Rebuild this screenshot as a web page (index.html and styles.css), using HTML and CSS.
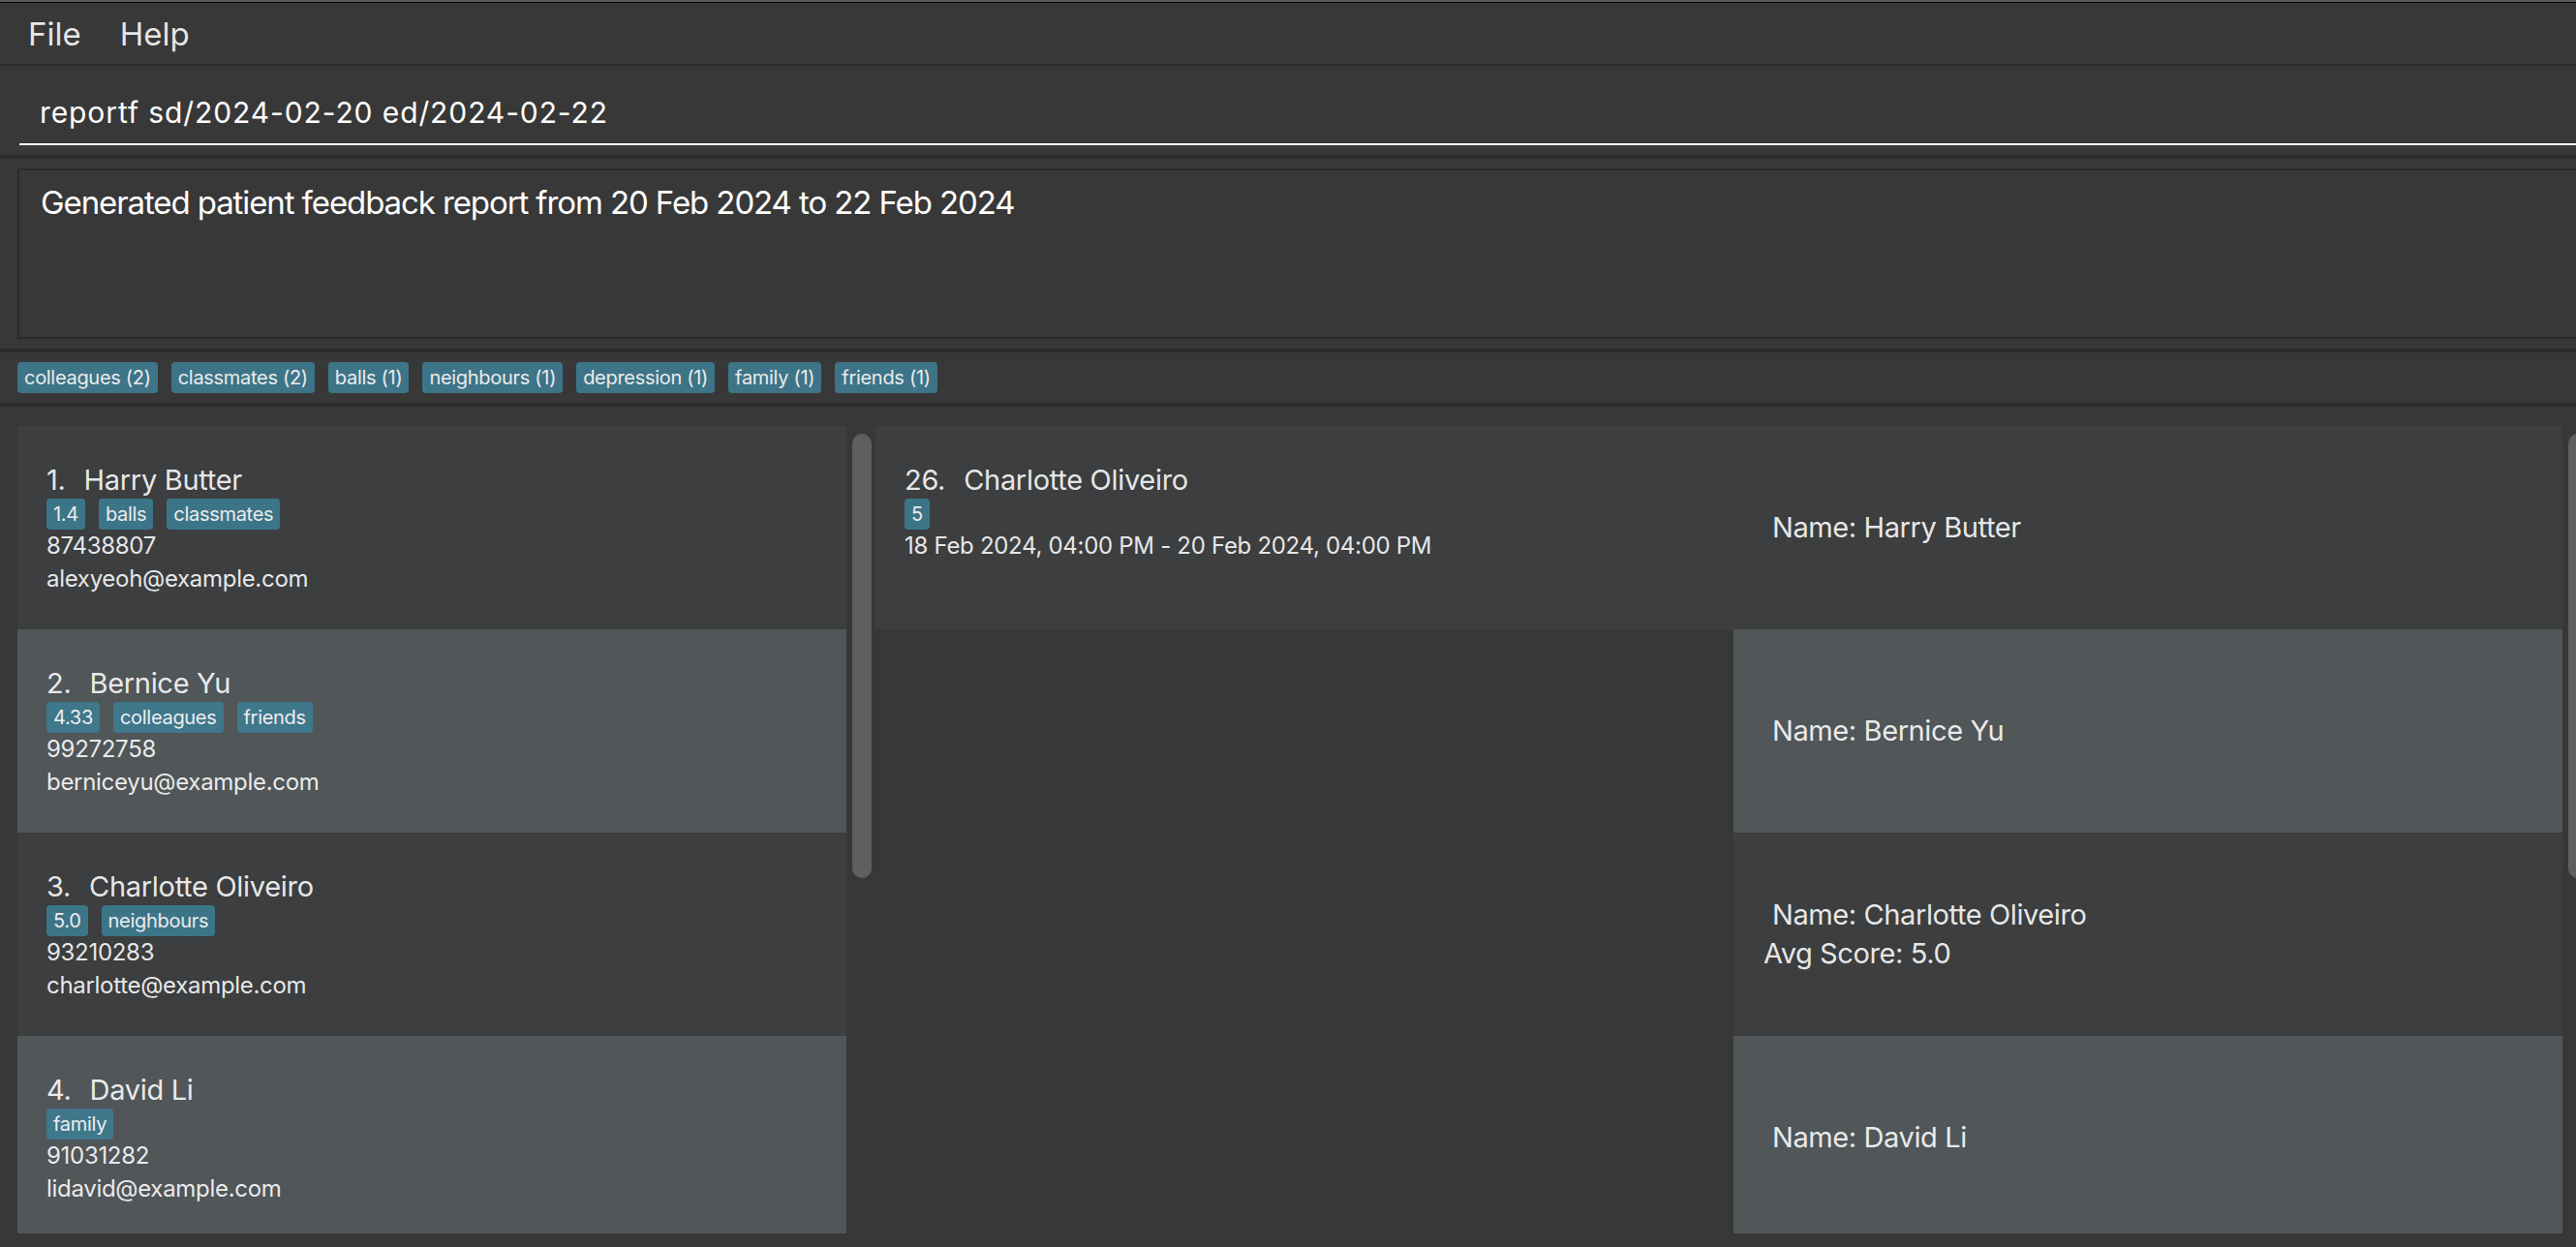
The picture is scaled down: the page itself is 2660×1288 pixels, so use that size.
FILE: index.html
```html
<!DOCTYPE html>
<html lang="en">
<head>
<meta charset="utf-8">
<title>Patient feedback</title>
<link rel="stylesheet" href="styles.css">
</head>
<body>
<div class="app">
  <div class="chrome"></div>
  <nav class="menubar">
    <span class="menu-item">File</span>
    <span class="menu-item">Help</span>
  </nav>
  <div class="rule"></div>
  <section class="command-pane">
    <div class="command-field">reportf sd/2024-02-20 ed/2024-02-22</div>
  </section>
  <div class="rule thick"></div>
  <section class="result-pane">
    <div class="result-box">Generated patient feedback report from 20 Feb 2024 to 22 Feb 2024</div>
  </section>
  <div class="rule thick"></div>
  <section class="tag-bar">
    <span class="tag">colleagues (2)</span>
    <span class="tag">classmates (2)</span>
    <span class="tag">balls (1)</span>
    <span class="tag">neighbours (1)</span>
    <span class="tag">depression (1)</span>
    <span class="tag">family (1)</span>
    <span class="tag">friends (1)</span>
  </section>
  <div class="rule thick"></div>
  <main class="lists">
    <div class="list list-persons">
      <div class="cells">
        <div class="card">
          <div class="name"><span class="idx">1.</span>Harry Butter</div>
          <div class="tags"><span class="tag">1.4</span><span class="tag">balls</span><span class="tag">classmates</span></div>
          <div class="small">87438807</div>
          <div class="small">alexyeoh@example.com</div>
        </div>
        <div class="card">
          <div class="name"><span class="idx">2.</span>Bernice Yu</div>
          <div class="tags"><span class="tag">4.33</span><span class="tag">colleagues</span><span class="tag">friends</span></div>
          <div class="small">99272758</div>
          <div class="small">berniceyu@example.com</div>
        </div>
        <div class="card">
          <div class="name"><span class="idx">3.</span>Charlotte Oliveiro</div>
          <div class="tags"><span class="tag">5.0</span><span class="tag">neighbours</span></div>
          <div class="small">93210283</div>
          <div class="small">charlotte@example.com</div>
        </div>
        <div class="card">
          <div class="name"><span class="idx">4.</span>David Li</div>
          <div class="tags"><span class="tag">family</span></div>
          <div class="small">91031282</div>
          <div class="small">lidavid@example.com</div>
        </div>
      </div>
      <div class="scroll-track"><div class="thumb"></div></div>
    </div>
    <div class="list list-events">
      <div class="cells">
        <div class="card">
          <div class="name"><span class="idx">26.</span>Charlotte Oliveiro</div>
          <div class="tags"><span class="tag">5</span></div>
          <div class="small">18 Feb 2024, 04:00 PM - 20 Feb 2024, 04:00 PM</div>
        </div>
      </div>
    </div>
    <div class="list list-scores">
      <div class="cells">
        <div class="score-card"><div class="score-name">Name: Harry Butter</div></div>
        <div class="score-card"><div class="score-name">Name: Bernice Yu</div></div>
        <div class="score-card"><div class="score-name">Name: Charlotte Oliveiro</div><div>Avg Score: 5.0</div></div>
        <div class="score-card"><div class="score-name">Name: David Li</div></div>
      </div>
      <div class="scroll-track"><div class="thumb"></div></div>
    </div>
  </main>
</div>
</body>
</html>
```
FILE: styles.css
```css
* { box-sizing: border-box; margin: 0; padding: 0; }

html, body {
  width: 2660px;
  height: 1288px;
  overflow: hidden;
  background: #383838;
}

body {
  font-family: Inter, "Noto Sans", "Liberation Sans", sans-serif;
  color: #ffffff;
}

.app {
  width: 2660px;
  height: 1288px;
  display: flex;
  flex-direction: column;
  overflow: hidden;
}

.chrome {
  flex: none;
  height: 3px;
  background: #5d5955;
  border-bottom: 1px solid #000000;
}

.menubar {
  flex: none;
  height: 63px;
  display: flex;
  align-items: center;
  padding-left: 9px;
}

.menu-item {
  font-size: 33px;
  padding: 0 20px;
  color: rgba(255, 255, 255, 0.88);
}

.rule {
  flex: none;
  height: 2px;
  background: #2b2b2b;
}

.rule.thick { height: 4px; }

.command-pane {
  flex: none;
  padding: 0 0 10px 20px;
}

.command-field {
  padding: 31px 0 15px 21px;
  font-size: 30px;
  line-height: 34px;
  letter-spacing: 0.9px;
  border-bottom: 2px solid #ffffff;
  white-space: nowrap;
}

.result-pane {
  flex: none;
  padding: 10px 0 10px 18px;
}

.result-box {
  height: 176px;
  border: 2px solid #2b2b2b;
  border-right: none;
  padding: 13px 0 0 22px;
  font-size: 33px;
  letter-spacing: -1.1px;
  white-space: nowrap;
}

.tag-bar {
  flex: none;
  height: 52px;
  padding: 10px 18px;
  display: flex;
  gap: 14px;
}

.tag {
  display: inline-block;
  height: 32px;
  line-height: 32px;
  padding: 0 7px;
  font-size: 20px;
  letter-spacing: -0.3px;
  background: #3e7b91;
  border-radius: 4px;
  opacity: 0.9;
  color: #ffffff;
  white-space: nowrap;
}

.lists {
  flex: 1;
  min-height: 0;
  display: flex;
  padding: 20px 0 0 18px;
}

.list {
  flex: none;
  width: 886px;
  height: 834px;
  display: flex;
  overflow: hidden;
}

.cells {
  flex: 1;
  display: flex;
  flex-direction: column;
}

.list-persons .cells,
.list-scores .cells {
  flex: none;
  width: 856px;
}

.scroll-track {
  flex: none;
  width: 30px;
  padding: 8px 4px 0 6px;
}

.thumb {
  height: 459px;
  background: #5f5f5f;
  border-radius: 10px;
}

.card {
  flex: none;
  height: 210px;
  padding: 38px 0 0 30px;
}

.card:nth-child(odd),
.score-card:nth-child(odd) { background: #3c3e3f; }

.card:nth-child(even),
.score-card:nth-child(even) { background: #515658; }

.name {
  font-size: 29px;
  line-height: 36px;
  letter-spacing: -0.3px;
  color: rgba(255, 255, 255, 0.9);
  white-space: nowrap;
}

.idx { margin-right: 19px; }

.tags {
  display: flex;
  gap: 14px;
  margin-top: 1px;
  height: 32px;
}

.small {
  font-size: 24px;
  line-height: 34px;
  letter-spacing: -0.3px;
  color: rgba(255, 255, 255, 0.9);
  white-space: nowrap;
}

.score-card {
  flex: none;
  height: 210px;
  display: flex;
  flex-direction: column;
  justify-content: center;
  padding-left: 31px;
  font-size: 29px;
  line-height: 40px;
  letter-spacing: -0.4px;
  color: rgba(255, 255, 255, 0.9);
}

.score-name { padding-left: 9px; }
```
